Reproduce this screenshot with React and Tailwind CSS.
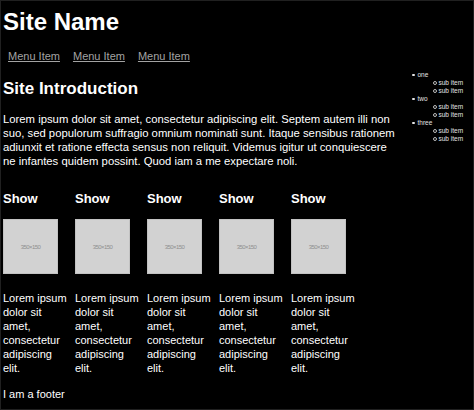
import React from "react";

const menu = ["Menu Item", "Menu Item", "Menu Item"];

const sideNav = [
  { label: "one", subs: ["sub item", "sub item"] },
  { label: "two", subs: ["sub item", "sub item"] },
  { label: "three", subs: ["sub item", "sub item"] },
];

const shows = [1, 2, 3, 4, 5];

function Placeholder() {
  return (
    <div className="w-[55px] h-[55px] bg-[#d2d2d2] border border-[#c2c2c2] flex items-center justify-center">
      <span className="text-[6px] leading-none tracking-[-0.6px] text-[#8f8f8f]">350×150</span>
    </div>
  );
}

function SideNav() {
  return (
    <ul className="w-[64px] pt-[7px] text-[6.5px] leading-[8px] text-[#e4e4e4]">
      {sideNav.map((item, i) => (
        <li key={i}>
          <div className="flex items-center">
            <span className="w-[2.5px] h-[2.5px] rounded-full bg-[#e4e4e4] ml-[5px] mr-[3px]" />
            <span>{item.label}</span>
          </div>
          <ul>
            {item.subs.map((s, j) => (
              <li key={j} className="flex items-center pl-[26px]">
                <span className="w-[3.5px] h-[3.5px] rounded-full border-[0.8px] border-[#bdbdbd] mr-[2px]" />
                <span>{s}</span>
              </li>
            ))}
          </ul>
        </li>
      ))}
    </ul>
  );
}

export default function App() {
  return (
    <div className="min-h-screen bg-black text-white border border-[#202020] font-['Liberation_Sans',Arial,sans-serif]">
      <div className="px-[2px]">
        {/* header */}
        <h1 className="pt-[7px] text-[24px] leading-[28px] font-bold">Site Name</h1>
        <nav className="mt-[14px] flex gap-[13px] pl-[5px] text-[11px] leading-[13px]">
          {menu.map((m, i) => (
            <a key={i} href="#" className="text-[#a3a3a3] underline underline-offset-[1px]">
              {m}
            </a>
          ))}
        </nav>

        {/* intro + side nav */}
        <div className="flex mt-[1px]">
          <div className="flex-1 pr-[8px]">
            <h2 className="mt-[15px] text-[17px] leading-[20px] font-bold">Site Introduction</h2>
            <p className="mt-[13px] text-[11.3px] leading-[14px] pr-[2px]">
              Lorem ipsum dolor sit amet, consectetur adipiscing elit. Septem autem illi non suo, sed populorum suffragio omnium nominati sunt. Itaque sensibus rationem adiunxit et ratione effecta sensus non reliquit. Videmus igitur ut conquiescere ne infantes quidem possint. Quod iam a me expectare noli.
            </p>
          </div>
          <SideNav />
        </div>

        {/* shows */}
        <div className="mt-[23px] flex gap-[5px]">
          {shows.map((s) => (
            <div key={s} className="w-[67px]">
              <h3 className="text-[13px] leading-[16px] font-bold">Show</h3>
              <div className="mt-[12px]">
                <Placeholder />
              </div>
              <p className="mt-[17px] text-[11px] leading-[14px]">
                Lorem ipsum dolor sit amet, consectetur adipiscing elit.
              </p>
            </div>
          ))}
        </div>

        {/* footer */}
        <footer className="mt-[13px] text-[11px] leading-[13px]">I am a footer</footer>
      </div>
    </div>
  );
}
